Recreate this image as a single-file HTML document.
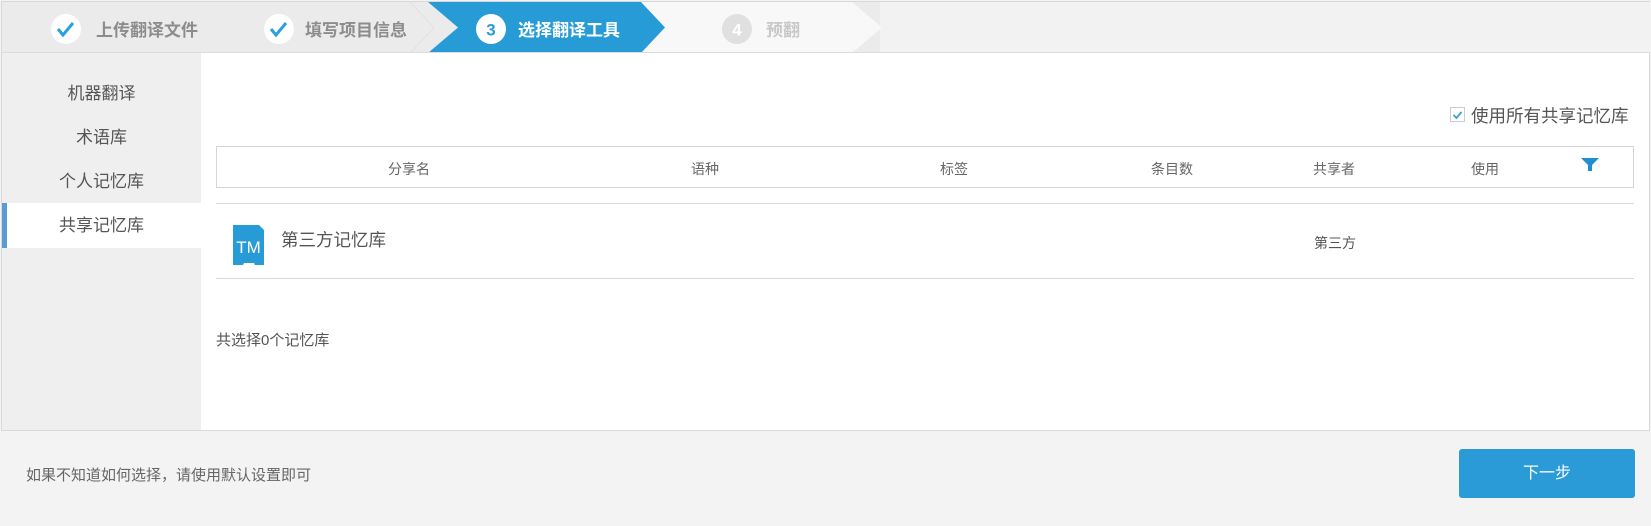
<!DOCTYPE html>
<html><head><meta charset="utf-8"><style>
*{margin:0;padding:0;box-sizing:border-box}
body{width:1651px;height:526px;background:#f3f3f3;font-family:"Liberation Sans","Noto Sans CJK SC",sans-serif;position:relative;overflow:hidden}
.a{position:absolute;white-space:nowrap}
#box{position:absolute;left:1px;top:1px;width:1649px;height:430px;border:1px solid #d9d9d9;background:#fff}
#side{position:absolute;left:2px;top:53px;width:199px;height:377px;background:#efefef}
.si{position:absolute;left:0;width:199px;text-align:center;font-size:17px;color:#555}
.th{position:absolute;top:159px;font-size:14px;color:#666;transform:translateX(-50%)}
</style></head><body>
<div id="box"></div>
<svg class="a" style="left:2px;top:2px" width="1648" height="51">
<rect width="1648" height="51" fill="#f2f2f2"/>
<polygon points="0,0 878,0 878,51 0,51" fill="#ebebeb"/>
<polygon points="426,0 850,0 880,25.5 850,51 426,51 456,25.5" fill="#f8f8f8"/>
<polygon points="426,0 639,0 663,25.5 639,51 426,51 456,25.5" fill="#279bd6"/>
<polyline points="408,0 432,25.5 408,51" fill="none" stroke="#e2e2e2" stroke-width="1"/>
<line x1="0" y1="50.5" x2="1648" y2="50.5" stroke="#dcdcdc"/>
<circle cx="64" cy="27" r="15" fill="#fff"/>
<path d="M56 27 l5 6 l10 -12" fill="none" stroke="#29a0e0" stroke-width="3"/>
<circle cx="277" cy="27" r="15" fill="#fff"/>
<path d="M269 27 l5 6 l10 -12" fill="none" stroke="#29a0e0" stroke-width="3"/>
<circle cx="489" cy="27" r="15" fill="#fff"/>
<text x="489" y="33.5" text-anchor="middle" font-size="17" font-weight="bold" fill="#279bd6" font-family="Liberation Sans">3</text>
<circle cx="735" cy="27" r="15" fill="#e0e0e0"/>
<text x="735" y="33.5" text-anchor="middle" font-size="17" font-weight="bold" fill="#fff" font-family="Liberation Sans">4</text>
</svg>
<div class="a" style="left:96px;top:16px;font-size:17px;font-weight:bold;color:#8c8c8c">上传翻译文件</div>
<div class="a" style="left:305px;top:16px;font-size:17px;font-weight:bold;color:#8c8c8c">填写项目信息</div>
<div class="a" style="left:518px;top:16px;font-size:17px;font-weight:bold;color:#fff">选择翻译工具</div>
<div class="a" style="left:766px;top:16px;font-size:17px;font-weight:bold;color:#c8c8c8">预翻</div>
<div id="side">
<div class="si" style="top:26px">机器翻译</div>
<div class="si" style="top:70px">术语库</div>
<div class="si" style="top:114px">个人记忆库</div>
<div class="si" style="top:150px;height:45px;background:#fff;line-height:45px">共享记忆库</div>
<div style="position:absolute;left:0;top:150px;width:5px;height:45px;background:#5b9bd5"></div>
</div>
<div class="a" style="left:1450px;top:107px;width:15px;height:15px;border:1px solid #ccc;background:#fff"></div>
<svg class="a" style="left:1450px;top:107px" width="15" height="15"><path d="M3.5 8 l3 3 l5 -6" fill="none" stroke="#3a9fd8" stroke-width="1.8"/></svg>
<div class="a" style="left:1471px;top:103px;font-size:17.5px;color:#555">使用所有共享记忆库</div>
<div class="a" style="left:216px;top:146px;width:1418px;height:42px;border:1px solid #d6d6d6"></div>
<div class="th" style="left:409px">分享名</div>
<div class="th" style="left:705px">语种</div>
<div class="th" style="left:954px">标签</div>
<div class="th" style="left:1172px">条目数</div>
<div class="th" style="left:1334px">共享者</div>
<div class="th" style="left:1485px">使用</div>
<svg class="a" style="left:1581px;top:158px" width="18" height="14"><path d="M0 0 H18 L11 7 V13 H7 V7 Z" fill="#1e8fd0"/></svg>
<div class="a" style="left:216px;top:203px;width:1418px;height:1px;background:#d9d9d9"></div>
<div class="a" style="left:216px;top:278px;width:1418px;height:1px;background:#d9d9d9"></div>
<svg class="a" style="left:233px;top:225px" width="33" height="41"><path d="M0 0 H26 L31 5 V40 H22 L21 38 H11 L10 40 H0 Z" fill="#279bd6"/><text x="15.5" y="28" text-anchor="middle" font-size="17" fill="#fff" font-family="Liberation Sans">TM</text></svg>
<div class="a" style="left:281px;top:227px;font-size:17.5px;color:#555">第三方记忆库</div>
<div class="a" style="left:1314px;top:233px;font-size:14px;color:#555">第三方</div>
<div class="a" style="left:216px;top:329px;font-size:15px;color:#555">共选择0个记忆库</div>
<div class="a" style="left:26px;top:464px;font-size:15px;color:#666">如果不知道如何选择，请使用默认设置即可</div>
<div class="a" style="left:1459px;top:449px;width:176px;height:49px;background:#2a9bd7;border-radius:3px;color:#fff;font-size:16px;text-align:center;line-height:49px">下一步</div>
</body></html>
